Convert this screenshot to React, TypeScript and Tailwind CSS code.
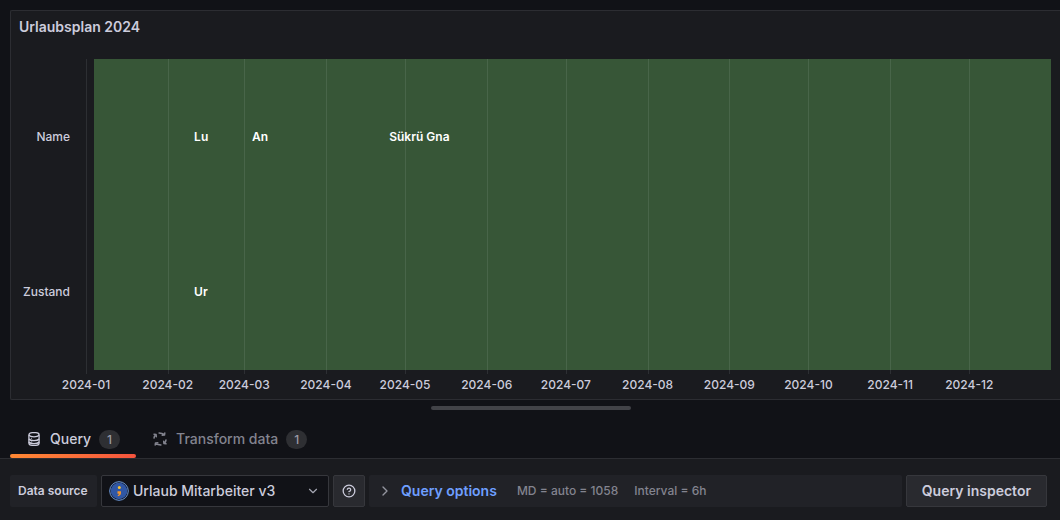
import { ChevronDown, ChevronRight, CircleQuestionMark } from 'lucide-react';

const DAYS_IN_YEAR = 366;
const PLOT_HEIGHT = 311;

const months = [
  { label: '2024-01', day: 0 },
  { label: '2024-02', day: 31 },
  { label: '2024-03', day: 60 },
  { label: '2024-04', day: 91 },
  { label: '2024-05', day: 121 },
  { label: '2024-06', day: 152 },
  { label: '2024-07', day: 182 },
  { label: '2024-08', day: 213 },
  { label: '2024-09', day: 244 },
  { label: '2024-10', day: 274 },
  { label: '2024-11', day: 305 },
  { label: '2024-12', day: 335 },
];

const entries = [
  { text: 'Lu', day: 41, row: 0 },
  { text: 'An', day: 63, row: 0 },
  { text: 'Sükrü Gna', day: 115, row: 0 },
  { text: 'Ur', day: 41, row: 1 },
];

const percent = (day: number) => `${(day / DAYS_IN_YEAR) * 100}%`;
const rowCenter = (row: number) => 78 + row * 155;

function Timeline() {
  return (
    <div className="flex pr-[9px]">
      <div className="flex h-[311px] w-[75px] flex-col pr-4 text-right text-xs font-medium text-[#ccccdc]">
        <div className="flex flex-1 items-center justify-end">Name</div>
        <div className="flex flex-1 items-center justify-end">Zustand</div>
      </div>
      <svg className="h-[340px] min-w-0 flex-1 overflow-visible" role="img" aria-label="Urlaubsplan 2024">
        <rect
          x={percent(3)}
          width={percent(DAYS_IN_YEAR - 3)}
          height={PLOT_HEIGHT}
          fill="#375637"
          shapeRendering="crispEdges"
        />
        {months.map((m) => (
          <g key={m.label}>
            <rect
              x={percent(m.day)}
              width="1"
              height={PLOT_HEIGHT + 4}
              fill="#f0faff"
              fillOpacity="0.09"
              shapeRendering="crispEdges"
            />
            <text x={percent(m.day)} y="330" textAnchor="middle" className="fill-[#ccccdc] text-xs font-medium">
              {m.label}
            </text>
          </g>
        ))}
        {entries.map((e) => (
          <text
            key={e.text}
            x={percent(e.day)}
            y={rowCenter(e.row) + 4}
            className="fill-white text-xs font-semibold"
          >
            {e.text}
          </text>
        ))}
      </svg>
    </div>
  );
}

function DatabaseIcon() {
  return (
    <svg viewBox="0 0 16 16" className="size-4" fill="none" stroke="currentColor" strokeWidth="1.300" aria-hidden="true">
      <rect x="2.900" y="1.700" width="10.200" height="12.600" rx="3.200" ry="2.200" />
      <path d="M2.900 4.200c.8 1.100 2.700 1.700 5.100 1.700s4.300-.6 5.100-1.700M2.900 8c.8 1.100 2.700 1.700 5.100 1.700s4.300-.6 5.100-1.700M2.900 11c.8 1.100 2.700 1.700 5.100 1.700s4.300-.6 5.100-1.700" />
      <path d="M4.900 7.300h.9M4.900 11h.9" strokeWidth="1" />
    </svg>
  );
}

function ProcessIcon() {
  return (
    <svg
      viewBox="0 0 16 16"
      className="size-4"
      fill="none"
      stroke="currentColor"
      strokeWidth="1.500"
      strokeLinecap="round"
      strokeLinejoin="round"
      aria-hidden="true"
    >
      <path d="M2 7.100C2.100 5.900 2.600 4.800 3.500 3.700M2 3.200l2.100.3.200 2.300" />
      <path d="M7.100 2c1.200.1 3.300.4 5.200 1.500M12.800 2l-.3 2.100-2.300.2" />
      <path d="M14 8.900c-.1 1.200-.6 2.300-1.500 3.400M14 12.800l-2.100-.3-.2-2.300" />
      <path d="M8.900 14c-1.200-.1-3.300-.4-5.200-1.500M3.200 14l.3-2.100 2.300-.2" />
    </svg>
  );
}

function SourceLogo() {
  return (
    <svg viewBox="0 0 20 20" className="size-5 shrink-0" aria-hidden="true">
      <circle cx="10" cy="10" r="9.300" fill="#111217" stroke="#6f9bdc" strokeWidth="1" />
      <circle cx="10" cy="10" r="8.300" fill="#3057a5" />
      <circle cx="10.300" cy="6.600" r="1.500" fill="#f9c22e" />
      <path d="M8.500 10.200h3.500v1.800c0 1.800-1 2.800-3.200 3.200v-1.300c.8-.2 1.300-.6 1.300-1.200H8.500z" fill="#f5952b" />
    </svg>
  );
}

function Count({ children }: { children: string }) {
  return (
    <span className="ml-2 rounded-full bg-[#2e2f33] px-2 text-xs leading-[19px] font-medium text-[#9a9ba6]">
      {children}
    </span>
  );
}

export default function App() {
  return (
    <div className="flex min-h-screen flex-col bg-[#111217] font-['Inter',sans-serif] text-sm text-[#ccccdc]">
      <section className="mt-2.5 ml-2.5 rounded-l-xs border border-r-0 border-[#2c2d32] bg-[#1a1b1f]">
        <h2 className="px-2 pt-1.5 pb-[22px] text-sm leading-5 font-semibold">Urlaubsplan 2024</h2>
        <Timeline />
      </section>

      <div className="flex h-4 items-center justify-center pl-0.5">
        <div className="h-1 w-[200px] rounded-full bg-[#424348]" />
      </div>

      <div role="tablist" className="flex h-[43px] border-b border-[#2c2d32] pl-2.5">
        <button role="tab" aria-selected="true" className="flex flex-col font-medium">
          <span className="flex flex-1 items-center px-4 pt-2">
            <DatabaseIcon />
            <span className="ml-2">Query</span>
            <Count>1</Count>
          </span>
          <span className="h-1 w-full rounded-xs bg-linear-to-r from-[#ff8833] to-[#f5533d]" />
        </button>
        <button role="tab" aria-selected="false" className="flex flex-col px-4 font-medium text-[#83848f]">
          <span className="flex flex-1 items-center pt-1">
            <ProcessIcon />
            <span className="ml-2">Transform data</span>
            <Count>1</Count>
          </span>
        </button>
      </div>

      <div className="flex flex-1 items-start gap-1 bg-[#1a1b1f] py-4 pr-[13px] pl-2.5">
        <label
          htmlFor="source"
          className="flex h-8 w-[87px] shrink-0 items-center rounded-xs bg-[#212227] px-2 text-xs font-semibold whitespace-nowrap"
        >
          Data source
        </label>
        <div className="flex h-8 w-[228px] shrink-0 items-center rounded-xs border border-[#36373c] bg-[#111217] pr-2 pl-[7px]">
          <SourceLogo />
          <select id="source" className="ml-1 min-w-0 flex-1 appearance-none bg-transparent font-medium outline-none">
            <option>Urlaub Mitarbeiter v3</option>
          </select>
          <ChevronDown className="size-3.5 text-[#a5a6b2]" />
        </div>
        <button
          aria-label="Help"
          className="flex size-8 shrink-0 items-center justify-center rounded-xs border border-[#36373c] bg-[#292a2f]"
        >
          <CircleQuestionMark className="size-3.5" strokeWidth={2.2} />
        </button>
        <div className="flex h-8 min-w-0 flex-1 items-center rounded-xs bg-[#212227] pl-2 whitespace-nowrap">
          <button className="flex items-center font-semibold text-[#6e9fff]">
            <ChevronRight className="mr-2 size-4 text-[#94959f]" />
            Query options
          </button>
          <span className="ml-5 text-xs leading-4 font-medium text-[#83848f]">MD = auto = 1058</span>
          <span className="ml-4 text-xs leading-4 font-medium text-[#83848f]">Interval = 6h</span>
        </div>
        <button className="h-8 shrink-0 rounded-xs border border-[#36373c] bg-[#292a2f] px-[15px] font-semibold">
          Query inspector
        </button>
      </div>
    </div>
  );
}
